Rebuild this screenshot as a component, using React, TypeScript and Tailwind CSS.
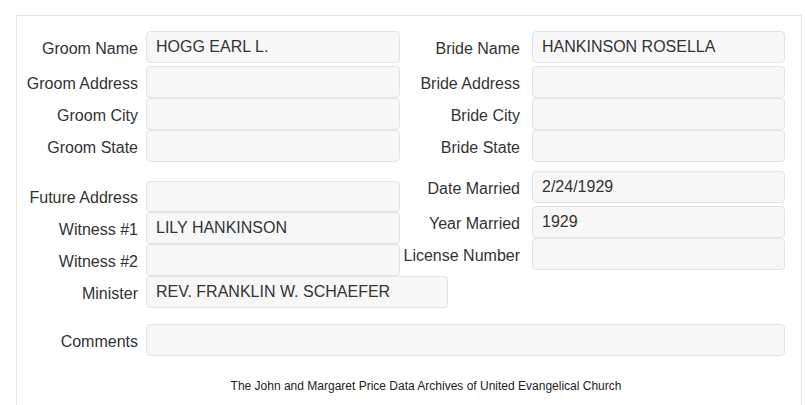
import React from "react";

const font = { fontFamily: '"Liberation Sans", Arial, sans-serif' };

function Field({
  label,
  value,
  labelW,
  gap,
  boxW,
  h = "h-8",
  className = "",
}: {
  label: string;
  value?: string;
  labelW: string;
  gap: string;
  boxW: string;
  h?: string;
  className?: string;
}) {
  return (
    <div className={`flex items-center ${gap} ${className}`}>
      <div className={`${labelW} shrink-0 text-right text-[16px] leading-[18px] text-[#333] pt-[3px] whitespace-nowrap`}>
        {label}
      </div>
      <div
        className={`${boxW} ${h} shrink-0 rounded-[4px] border border-[#e3e3e3] bg-[#f7f7f7] px-[9px] flex items-center text-[16px] text-[#333]`}
      >
        {value}
      </div>
    </div>
  );
}

export default function App() {
  const L = { labelW: "w-[121px]", gap: "gap-[8px]", boxW: "w-[254px]" };
  const R = { labelW: "w-[120px]", gap: "gap-[12px]", boxW: "w-[253px]" };
  return (
    <div className="w-[805px] h-[405px] overflow-hidden bg-white" style={font}>
      <div className="ml-[16px] mt-[15px] w-[786px] h-[420px] border border-[#e5e5e5] border-b-0 pt-[15px]">
        {/* Section 1 */}
        <div className="flex">
          <div className="w-[383px] flex flex-col">
            <Field label="Groom Name" value="HOGG EARL L." {...L} className="mb-[3px]" />
            <Field label="Groom Address" {...L} />
            <Field label="Groom City" {...L} />
            <Field label="Groom State" {...L} />
          </div>
          <div className="flex flex-col">
            <Field label="Bride Name" value="HANKINSON ROSELLA" {...R} className="mb-[3px]" />
            <Field label="Bride Address" {...R} />
            <Field label="Bride City" {...R} />
            <Field label="Bride State" {...R} />
          </div>
        </div>
        {/* Section 2 */}
        <div className="flex mt-[9px]">
          <div className="w-[383px] flex flex-col pt-[10px]">
            <Field label="Future Address" {...L} h="h-[31px]" />
            <Field label="Witness #1" value="LILY HANKINSON" {...L} />
            <Field label="Witness #2" {...L} />
            <Field label="Minister" value="REV. FRANKLIN W. SCHAEFER" labelW={L.labelW} gap={L.gap} boxW="w-[302px]" />
          </div>
          <div className="flex flex-col">
            <Field label="Date Married" value="2/24/1929" {...R} className="mb-[3px]" />
            <Field label="Year Married" value="1929" {...R} />
            <Field label="License Number" {...R} />
          </div>
        </div>
        {/* Comments */}
        <div className="mt-[16px]">
          <Field label="Comments" labelW={L.labelW} gap={L.gap} boxW="w-[639px]" />
        </div>
        <div className="mt-[21px] text-center text-[12px] text-[#222] pl-[34px]">
          The John and Margaret Price Data Archives of United Evangelical Church
        </div>
      </div>
    </div>
  );
}
